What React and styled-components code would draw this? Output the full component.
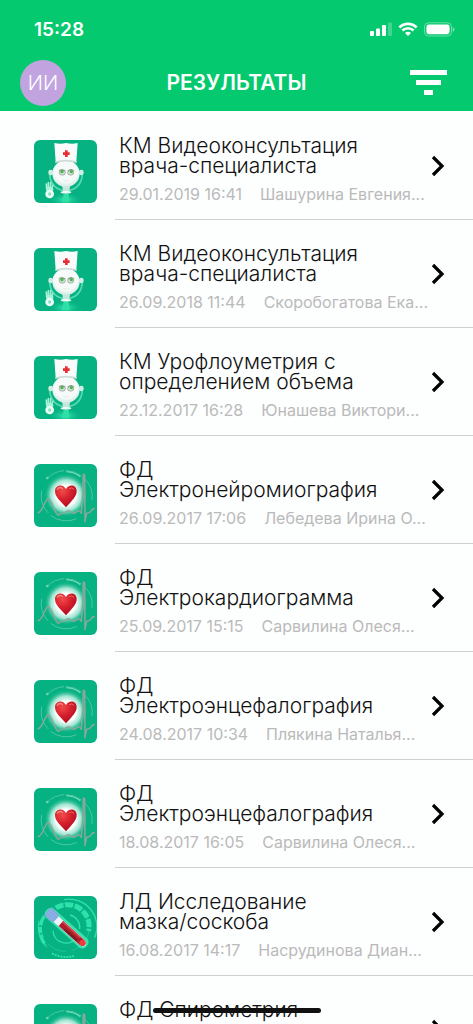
import styled, { createGlobalStyle } from 'styled-components';

const results = [
  { id: 1, type: 'doctor', title: 'КМ Видеоконсультация врача-специалиста', date: '29.01.2019 16:41', doctor: 'Шашурина Евгения...' },
  { id: 2, type: 'doctor', title: 'КМ Видеоконсультация врача-специалиста', date: '26.09.2018 11:44', doctor: 'Скоробогатова Ека...' },
  { id: 3, type: 'doctor', title: 'КМ Урофлоуметрия с определением объема', date: '22.12.2017 16:28', doctor: 'Юнашева Виктори...' },
  { id: 4, type: 'heart', title: 'ФД Электронейромиография', date: '26.09.2017 17:06', doctor: 'Лебедева Ирина О...' },
  { id: 5, type: 'heart', title: 'ФД Электрокардиограмма', date: '25.09.2017 15:15', doctor: 'Сарвилина Олеся...' },
  { id: 6, type: 'heart', title: 'ФД Электроэнцефалография', date: '24.08.2017 10:34', doctor: 'Плякина Наталья...' },
  { id: 7, type: 'heart', title: 'ФД Электроэнцефалография', date: '18.08.2017 16:05', doctor: 'Сарвилина Олеся...' },
  { id: 8, type: 'lab', title: 'ЛД Исследование мазка/соскоба', date: '16.08.2017 14:17', doctor: 'Насрудинова Диан...' },
  { id: 9, type: 'heart', title: 'ФД Спирометрия', date: '', doctor: '' },
];

const App = () => {
  return (
    <Screen>
      <GlobalStyle />
      <Header>
        <StatusBar>
          <Time>15:28</Time>
          <StatusIcons />
        </StatusBar>
        <Toolbar>
          <Avatar type="button">ИИ</Avatar>
          <PageTitle>РЕЗУЛЬТАТЫ</PageTitle>
          <FilterButton type="button" aria-label="Фильтр">
            <svg width="37" height="26" viewBox="0 0 37 26" fill="#fff">
              <path d="M0 0h37v5H0zM6 10h25v5H6zM14 20h9v5h-9z" />
            </svg>
          </FilterButton>
        </Toolbar>
      </Header>
      <List>
        {results.map((result) => (
          <ResultRow key={result.id} result={result} />
        ))}
      </List>
      <HomeIndicator />
    </Screen>
  );
};

const ResultRow = ({ result }) => {
  const Picture = pictures[result.type];

  return (
    <Row>
      <RowLink href={`#result-${result.id}`}>
        <Picture />
        <RowBody>
          <RowText>
            <RowTitle>{result.title}</RowTitle>
            <RowMeta>
              <span>{result.date}</span>
              <span>{result.doctor}</span>
            </RowMeta>
          </RowText>
          <Chevron width="14" height="22" viewBox="0 0 14 22">
            <path d="M2 2l9 9-9 9" fill="none" stroke="#000" strokeWidth="3.2" />
          </Chevron>
        </RowBody>
      </RowLink>
    </Row>
  );
};

const StatusIcons = () => (
  <svg width="85" height="16" viewBox="0 0 85 16" fill="#fff">
    <rect x="0" y="9" width="4" height="5" rx="1" />
    <rect x="6" y="6.5" width="4" height="7.5" rx="1" />
    <rect x="12" y="3" width="4" height="11" rx="1" />
    <rect x="18" y="0.5" width="4" height="13.5" rx="1" opacity="0.25" />
    <g fill="none" stroke="#fff" strokeWidth="2.8">
      <path d="M29.4 5.4a12.2 12.2 0 0 1 17.2 0" />
      <path d="M32.4 8.5a7.9 7.9 0 0 1 11.2 0" strokeWidth="2.5" />
    </g>
    <path d="M35 11a4.2 4.2 0 0 1 6 0l-3 3z" />
    <rect x="54.5" y="0.8" width="27" height="13.2" rx="4" fill="none" stroke="#fff" strokeOpacity="0.4" />
    <rect x="56.4" y="2.6" width="23.2" height="9.6" rx="2.4" />
    <path d="M82.7 5.2q1.8.6 1.8 2.3t-1.8 2.3z" opacity="0.45" />
  </svg>
);

const DoctorPicture = () => (
  <Tile viewBox="0 0 189 189">
    <defs>
      <radialGradient id="face" cx="0.5" cy="0.4" r="0.6">
        <stop offset="0.7" stopColor="#f6faf8" />
        <stop offset="1" stopColor="#cfeae1" />
      </radialGradient>
      <radialGradient id="floor">
        <stop offset="0" stopColor="#3df0b8" />
        <stop offset="1" stopColor="#06b182" stopOpacity="0" />
      </radialGradient>
    </defs>
    <ellipse cx="94" cy="179" rx="52" ry="22" fill="url(#floor)" />
    <path d="M47 104c2 30 22 48 49 48s47-18 49-48" fill="none" stroke="#54dcb3" strokeWidth="5" />
    <path d="M84 134h25l-4 24H88z" fill="#c4e9dc" />
    <ellipse cx="96" cy="157" rx="16" ry="4" fill="#effaf6" />
    <path d="M89 161h15l3 26H84z" fill="#2de0a5" />
    <rect x="43" y="89" width="14" height="17" rx="7" fill="#cdeee2" />
    <rect x="135" y="89" width="14" height="17" rx="7" fill="#cdeee2" />
    <ellipse cx="96" cy="101" rx="41" ry="40" fill="url(#face)" />
    <path d="M61 9q18 5 35 0 18 5 35 0l-4 58q-31-10-62 0z" fill="#f9fbfa" />
    <path d="M64 64q32-9 64 0v5q-32-9-64 0z" fill="#cfddd8" />
    <path d="M93 31h8v6h6v8h-6v6h-8v-6h-6v-8h6z" fill="#e92b34" />
    <g fill="#d9e7d9" stroke="#819088" strokeWidth="2">
      <rect x="76" y="91" width="18" height="14" rx="7" />
      <rect x="101" y="91" width="18" height="14" rx="7" />
    </g>
    <circle cx="84" cy="95" r="5" fill="#48b747" />
    <circle cx="112" cy="95" r="5" fill="#48b747" />
    <path d="M74 92q9-8 20 0M101 92q10-8 20 0" fill="none" stroke="#657d6c" strokeWidth="2" />
    <path d="M88 121q9 5 18 0" fill="none" stroke="#d6e4de" strokeWidth="2" />
    <g fill="none" stroke="#a4f0d7" strokeWidth="5" strokeLinecap="round">
      <path d="M38 146l-1-14M43 143v-15M49 143l1-15M54 146l2-10" />
    </g>
    <ellipse cx="47" cy="148" rx="11" ry="8" fill="#a9f1d8" />
    <circle cx="47" cy="162" r="13" fill="#eefcf7" />
    <circle cx="47" cy="162" r="5" fill="#8be3c7" />
  </Tile>
);

const HeartPicture = () => (
  <Tile viewBox="0 0 189 189">
    <defs>
      <radialGradient id="glow">
        <stop offset="0.45" stopColor="#fff" />
        <stop offset="0.7" stopColor="#c5f1e3" stopOpacity="0.8" />
        <stop offset="1" stopColor="#06b182" stopOpacity="0" />
      </radialGradient>
      <radialGradient id="heart" cx="0.35" cy="0.25" r="0.8">
        <stop offset="0" stopColor="#f04c4c" />
        <stop offset="0.5" stopColor="#d61f2c" />
        <stop offset="1" stopColor="#a90d22" />
      </radialGradient>
    </defs>
    <circle cx="96" cy="94" r="66" fill="url(#glow)" />
    <g fill="none" stroke="#5acba9" strokeWidth="2.5">
      <path d="M38 45a76 76 0 0 1 53-25M97 20a75 75 0 0 1 45 16M150 43a75 75 0 0 1 24 66M23 80a75 75 0 0 0 20 67M50 154a75 75 0 0 0 78 10" />
    </g>
    <path d="M97 23a72 72 0 0 1 42 15" fill="none" stroke="#77d9ba" strokeWidth="4" />
    <circle cx="40" cy="42" r="4" fill="#70d3b5" />
    <path
      d="M11 147q10-3 17-20t13-23q8-1 15 20t16 30q9-8 20-7 11-11 18-4 10 10 20-2 7-3 12 7l4-58 2-59 4 1 1 141 5-25q8 1 14-8 4-7 10-6"
      fill="none"
      stroke="#8aa79c"
      strokeWidth="4.5"
      strokeLinejoin="round"
    />
    <path d="M96 130C82 112 62 99 63 80c1-15 22-23 33-5 11-17 31-11 32 5 1 18-17 32-32 50z" fill="url(#heart)" />
    <path d="M70 76q6-9 15-3" fill="none" stroke="#f58a83" strokeWidth="4" strokeLinecap="round" />
    <path d="M106 74q8-7 14 2" fill="none" stroke="#ed6566" strokeWidth="3" strokeLinecap="round" />
  </Tile>
);

const LabPicture = () => (
  <Tile viewBox="0 0 189 189">
    <g fill="none" stroke="#2de2ab">
      <circle cx="94" cy="94" r="72" strokeWidth="3" strokeDasharray="92 18 60 24" opacity="0.5" />
      <path d="M90 11a83 83 0 0 1 92 114" strokeWidth="4" />
      <path d="M31 60a74 74 0 0 0 5 89" strokeWidth="10" strokeDasharray="30 5 18 5" />
      <path d="M15 74a82 82 0 0 0 24 80" strokeWidth="3" />
      <path d="M66 36a65 65 0 0 1 98 69" strokeWidth="15" strokeDasharray="24 5" />
      <path d="M57 104a39 39 0 0 0 67 25M108 57a39 39 0 0 1 29 42" strokeWidth="4" />
      <path d="M54 172q32 17 66 8" strokeWidth="6" strokeDasharray="6 3" />
    </g>
    <g transform="rotate(42 97 97)">
      <rect x="16" y="78" width="162" height="36" rx="15" fill="#4df0bd" opacity="0.75" />
      <path d="M46 86h112q16 2 16 11t-16 11H46z" fill="#edf4fa" />
      <path d="M75 87h84q13 2 13 10t-13 10H75z" fill="#b01e29" />
      <path d="M75 87h72v5H75z" fill="#d64a49" />
      <path d="M96 100h49v6H96z" fill="#721c25" />
      <circle cx="162" cy="97" r="9" fill="#ef3d3e" />
      <rect x="20" y="81" width="36" height="31" rx="6" fill="#85a8e0" />
      <path d="M23 89h30M23 97h30M23 105h30" stroke="#a0bfee" strokeWidth="2" />
    </g>
  </Tile>
);

const pictures = {
  doctor: DoctorPicture,
  heart: HeartPicture,
  lab: LabPicture,
};

const GlobalStyle = createGlobalStyle`
  * {
    box-sizing: border-box;
  }

  html {
    scrollbar-width: none;
  }

  body {
    margin: 0;
    background: #fdfefe;
    font-family: Inter, 'Liberation Sans', sans-serif;
  }
`;

const Screen = styled.div`
  height: 100vh;
  display: flex;
  flex-direction: column;
  overflow: hidden;
`;

const Header = styled.header`
  flex-shrink: 0;
  background: #05c96e;
  color: #fff;
`;

const StatusBar = styled.div`
  display: flex;
  justify-content: space-between;
  align-items: center;
  padding: 20px 18px 0 34px;
  height: 40px;
`;

const Time = styled.span`
  font-size: 19px;
  font-weight: 600;
  line-height: 20px;
`;

const Toolbar = styled.div`
  display: grid;
  grid-template-columns: 46px 1fr 46px;
  align-items: center;
  padding: 20px 20px 5px;
`;

const Avatar = styled.button`
  width: 46px;
  height: 46px;
  padding: 0;
  border: 0;
  border-radius: 50%;
  background: #c1a4df;
  color: #fff;
  font-family: inherit;
  font-size: 20px;
  font-weight: 300;
`;

const PageTitle = styled.h1`
  margin: 0;
  font-size: 21px;
  font-weight: 600;
  line-height: 24px;
  text-align: center;
`;

const FilterButton = styled.button`
  display: flex;
  justify-content: flex-end;
  padding: 0 6px 0 0;
  border: 0;
  background: none;
`;

const List = styled.ul`
  flex: 1;
  min-height: 0;
  margin: 0;
  padding: 1px 0 0;
  list-style: none;
  overflow-y: auto;
  scrollbar-width: none;
`;

const Row = styled.li`
  height: 108px;
`;

const RowLink = styled.a`
  display: flex;
  height: 100%;
  padding-left: 34px;
  color: #111;
  text-decoration: none;
`;

const Tile = styled.svg`
  flex-shrink: 0;
  width: 63px;
  height: 63px;
  margin: 28px 18px 0 0;
  border-radius: 6px;
  background: #06b182;
`;

const RowBody = styled.div`
  flex: 1;
  min-width: 0;
  display: flex;
  justify-content: space-between;
  align-items: center;
  padding: 0 28px 0 4px;
  border-bottom: 1px solid #d0d0d0;
`;

const RowText = styled.div`
  flex: 1;
  min-width: 0;
  align-self: flex-start;
  padding-top: 24px;
`;

const RowTitle = styled.h2`
  max-width: 260px;
  margin: 0;
  font-size: 21px;
  font-weight: 300;
  line-height: 20px;
`;

const RowMeta = styled.p`
  display: flex;
  gap: 18px;
  margin: 8px 0 0;
  color: #bababa;
  font-size: 16px;
  font-weight: 400;
  line-height: 20px;
  white-space: nowrap;
`;

const Chevron = styled.svg`
  flex-shrink: 0;
`;

const HomeIndicator = styled.div`
  position: fixed;
  bottom: 11px;
  left: 50%;
  width: 168px;
  height: 5px;
  border-radius: 3px;
  background: #111;
  transform: translateX(-50%);
`;

export default App;
